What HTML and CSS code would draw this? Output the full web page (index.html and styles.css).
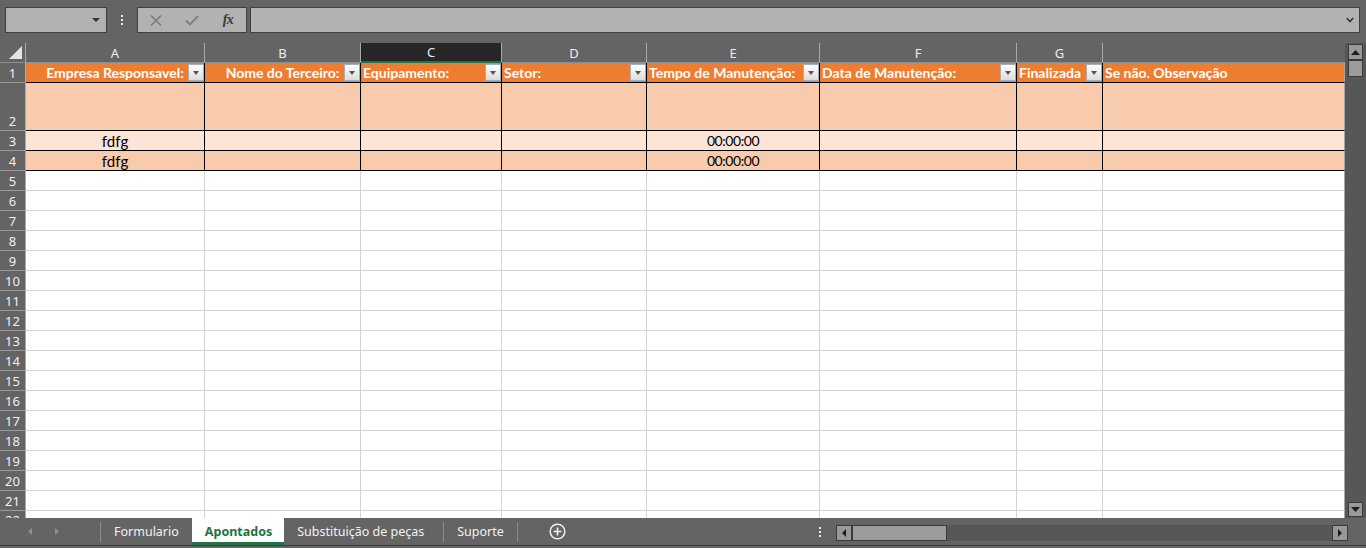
FILE: index.html
```html
<!DOCTYPE html>
<html>
<head>
<meta charset="utf-8">
<link rel="stylesheet" href="styles.css">
</head>
<body>
<div class="app">
  <div class="toolbar">
    <div class="namebox"><span class="nb-arrow"></span></div>
    <div class="vdots"><i></i><i></i><i></i></div>
    <div class="fbtns">
      <div class="fbtn"><svg width="12" height="11" viewBox="0 0 12 11"><path d="M1 0.5 L11 10.5 M11 0.5 L1 10.5" stroke="#7c7c7c" stroke-width="1.6" fill="none"/></svg></div>
      <div class="fbtn"><svg width="14" height="11" viewBox="0 0 14 11"><path d="M1 5.5 L5 9.5 L13 0.8" stroke="#7c7c7c" stroke-width="1.8" fill="none"/></svg></div>
      <div class="fbtn"><span class="fx">fx</span></div>
    </div>
    <div class="finput"><svg width="8" height="6" viewBox="0 0 8 6"><path d="M0.8 1 L4 4.5 L7.2 1" stroke="#333" stroke-width="1.6" fill="none"/></svg></div>
  </div>

  <div class="main">
    <div class="grid">
      <div class="row hdr">
        <div class="corner"><svg width="13" height="13" viewBox="0 0 13 13"><path d="M13 0 L13 13 L0 13 Z" fill="#e4e4e4"/></svg></div>
        <div class="ch">A</div>
        <div class="ch">B</div>
        <div class="ch sel">C</div>
        <div class="ch">D</div>
        <div class="ch">E</div>
        <div class="ch">F</div>
        <div class="ch">G</div>
        <div class="ch last"></div>
      </div>

      <div class="row r1">
        <div class="rh">1</div>
        <div class="c th ctr">Empresa Responsavel:<span class="fb"></span></div>
        <div class="c th ctr">Nome do Terceiro:<span class="fb"></span></div>
        <div class="c th">Equipamento:<span class="fb"></span></div>
        <div class="c th">Setor:<span class="fb"></span></div>
        <div class="c th">Tempo de Manutenção:<span class="fb"></span></div>
        <div class="c th">Data de Manutenção:<span class="fb"></span></div>
        <div class="c th">Finalizada<span class="fb"></span></div>
        <div class="c th last">Se não. Observação</div>
      </div>

      <div class="row r2">
        <div class="rh">2</div>
        <div class="c tb dark"></div><div class="c tb dark"></div><div class="c tb dark"></div><div class="c tb dark"></div>
        <div class="c tb dark"></div><div class="c tb dark"></div><div class="c tb dark"></div><div class="c tb dark last"></div>
      </div>

      <div class="row">
        <div class="rh">3</div>
        <div class="c tb light ctr">fdfg</div><div class="c tb light"></div><div class="c tb light"></div><div class="c tb light"></div>
        <div class="c tb light ctr num">00:00:00</div><div class="c tb light"></div><div class="c tb light"></div><div class="c tb light last"></div>
      </div>

      <div class="row">
        <div class="rh">4</div>
        <div class="c tb dark ctr">fdfg</div><div class="c tb dark"></div><div class="c tb dark"></div><div class="c tb dark"></div>
        <div class="c tb dark ctr num">00:00:00</div><div class="c tb dark"></div><div class="c tb dark"></div><div class="c tb dark last"></div>
      </div>

      <div class="row"><div class="rh">5</div><div class="c"></div><div class="c"></div><div class="c"></div><div class="c"></div><div class="c"></div><div class="c"></div><div class="c"></div><div class="c last"></div></div>
      <div class="row"><div class="rh">6</div><div class="c"></div><div class="c"></div><div class="c"></div><div class="c"></div><div class="c"></div><div class="c"></div><div class="c"></div><div class="c last"></div></div>
      <div class="row"><div class="rh">7</div><div class="c"></div><div class="c"></div><div class="c"></div><div class="c"></div><div class="c"></div><div class="c"></div><div class="c"></div><div class="c last"></div></div>
      <div class="row"><div class="rh">8</div><div class="c"></div><div class="c"></div><div class="c"></div><div class="c"></div><div class="c"></div><div class="c"></div><div class="c"></div><div class="c last"></div></div>
      <div class="row"><div class="rh">9</div><div class="c"></div><div class="c"></div><div class="c"></div><div class="c"></div><div class="c"></div><div class="c"></div><div class="c"></div><div class="c last"></div></div>
      <div class="row"><div class="rh">10</div><div class="c"></div><div class="c"></div><div class="c"></div><div class="c"></div><div class="c"></div><div class="c"></div><div class="c"></div><div class="c last"></div></div>
      <div class="row"><div class="rh">11</div><div class="c"></div><div class="c"></div><div class="c"></div><div class="c"></div><div class="c"></div><div class="c"></div><div class="c"></div><div class="c last"></div></div>
      <div class="row"><div class="rh">12</div><div class="c"></div><div class="c"></div><div class="c"></div><div class="c"></div><div class="c"></div><div class="c"></div><div class="c"></div><div class="c last"></div></div>
      <div class="row"><div class="rh">13</div><div class="c"></div><div class="c"></div><div class="c"></div><div class="c"></div><div class="c"></div><div class="c"></div><div class="c"></div><div class="c last"></div></div>
      <div class="row"><div class="rh">14</div><div class="c"></div><div class="c"></div><div class="c"></div><div class="c"></div><div class="c"></div><div class="c"></div><div class="c"></div><div class="c last"></div></div>
      <div class="row"><div class="rh">15</div><div class="c"></div><div class="c"></div><div class="c"></div><div class="c"></div><div class="c"></div><div class="c"></div><div class="c"></div><div class="c last"></div></div>
      <div class="row"><div class="rh">16</div><div class="c"></div><div class="c"></div><div class="c"></div><div class="c"></div><div class="c"></div><div class="c"></div><div class="c"></div><div class="c last"></div></div>
      <div class="row"><div class="rh">17</div><div class="c"></div><div class="c"></div><div class="c"></div><div class="c"></div><div class="c"></div><div class="c"></div><div class="c"></div><div class="c last"></div></div>
      <div class="row"><div class="rh">18</div><div class="c"></div><div class="c"></div><div class="c"></div><div class="c"></div><div class="c"></div><div class="c"></div><div class="c"></div><div class="c last"></div></div>
      <div class="row"><div class="rh">19</div><div class="c"></div><div class="c"></div><div class="c"></div><div class="c"></div><div class="c"></div><div class="c"></div><div class="c"></div><div class="c last"></div></div>
      <div class="row"><div class="rh">20</div><div class="c"></div><div class="c"></div><div class="c"></div><div class="c"></div><div class="c"></div><div class="c"></div><div class="c"></div><div class="c last"></div></div>
      <div class="row"><div class="rh">21</div><div class="c"></div><div class="c"></div><div class="c"></div><div class="c"></div><div class="c"></div><div class="c"></div><div class="c"></div><div class="c last"></div></div>
      <div class="row"><div class="rh top">22</div><div class="c"></div><div class="c"></div><div class="c"></div><div class="c"></div><div class="c"></div><div class="c"></div><div class="c"></div><div class="c last"></div></div>
    </div>
    <div class="vscroll">
      <div class="sbtn"><svg width="9" height="5" viewBox="0 0 9 5"><path d="M0 5 L4.5 0 L9 5 Z" fill="#1e1e1e"/></svg></div>
      <div class="vthumb"></div>
      <div class="sbtn bottom"><svg width="9" height="5" viewBox="0 0 9 5"><path d="M0 0 L9 0 L4.5 5 Z" fill="#1e1e1e"/></svg></div>
    </div>
  </div>

  <div class="tabbar">
    <div class="tabrow">
      <div class="tabnav">
        <svg width="4" height="7" viewBox="0 0 4 7"><path d="M4 0 L0 3.5 L4 7 Z" fill="#8e8e8e"/></svg>
        <svg width="4" height="7" viewBox="0 0 4 7"><path d="M0 0 L4 3.5 L0 7 Z" fill="#8e8e8e"/></svg>
      </div>
      <div class="tsep"></div>
      <div class="tab">Formulario</div>
      <div class="tab active">Apontados</div>
      <div class="tab wide">Substituição de peças</div>
      <div class="tsep"></div>
      <div class="tab">Suporte</div>
      <div class="tsep"></div>
      <div class="addtab"><svg width="17" height="17" viewBox="0 0 17 17"><circle cx="8.5" cy="8.5" r="7.3" stroke="#f2f2f2" stroke-width="1.5" fill="none"/><path d="M8.5 4.6 V12.4 M4.6 8.5 H12.4" stroke="#f2f2f2" stroke-width="1.6"/></svg></div>
      <div class="spacer"></div>
      <div class="hdots"><i></i><i></i><i></i></div>
      <div class="hscroll">
        <div class="hbtn"><svg width="4" height="8" viewBox="0 0 4 8"><path d="M4 0 L0 4 L4 8 Z" fill="#1e1e1e"/></svg></div>
        <div class="hthumb"></div>
        <div class="htrack"></div>
        <div class="hbtn"><svg width="4" height="8" viewBox="0 0 4 8"><path d="M0 0 L4 4 L0 8 Z" fill="#1e1e1e"/></svg></div>
      </div>
    </div>
  </div>
</div>
</body>
</html>
```

FILE: styles.css
```css
* { box-sizing: border-box; margin: 0; padding: 0; }
html, body { width: 1366px; height: 548px; overflow: hidden; }
body { background: #646464; font-family: "Noto Sans", "Open Sans", sans-serif; }

.app { width: 1366px; height: 548px; display: flex; flex-direction: column; }

/* ---------- formula bar ---------- */
.toolbar { height: 43px; flex: none; display: flex; align-items: flex-start; padding: 7px 6px 0 5px; }
.namebox { width: 102px; height: 26px; background: #b2b2b2; border: 1px solid #404040; display: flex; align-items: center; justify-content: flex-end; padding-right: 6px; }
.nb-arrow { width: 0; height: 0; border-left: 4px solid transparent; border-right: 4px solid transparent; border-top: 4px solid #333; }
.vdots { width: 30px; height: 26px; display: flex; flex-direction: column; align-items: center; justify-content: center; gap: 2px; }
.vdots i, .hdots i { display: block; width: 2px; height: 2px; background: #ececec; }
.fbtns { width: 110px; height: 26px; background: #b2b2b2; border: 1px solid #404040; display: flex; }
.fbtn { width: 36px; display: flex; align-items: center; justify-content: center; }
.fx { font-family: "Liberation Serif", "DejaVu Serif", serif; font-style: italic; font-weight: bold; font-size: 14px; color: #3a3a3a; line-height: 1; letter-spacing: -0.5px; }
.finput { flex: 1; margin-left: 3px; height: 26px; background: #b2b2b2; border: 1px solid #404040; display: flex; align-items: center; justify-content: flex-end; padding-right: 5px; }

/* ---------- sheet ---------- */
.main { height: 475px; flex: none; display: flex; }
.grid { width: 1345px; height: 475px; overflow: hidden; background: #fff; display: flex; flex-direction: column; }
.row { display: grid; grid-template-columns: 26px 179px 156px 141px 145px 173px 197px 86px 242px; height: 20px; flex: none; }
.row.r2 { height: 48px; }

.hdr { background: #646464; }
.corner { border-right: 1px solid #a9a9a9; border-bottom: 1px solid #8e8e8e; display: flex; align-items: flex-end; justify-content: flex-end; padding: 0 3px 3px 0; }
.ch { border-right: 1px solid #a9a9a9; border-bottom: 1px solid #8e8e8e; color: #ececec; font-size: 13px; line-height: 18px; display: flex; justify-content: center; align-items: center; }
.ch.sel { background: #262626; border-bottom: 2px solid #217346; }
.ch.last { border-right: none; }

.rh { background: #646464; border-right: 1px solid #a9a9a9; border-bottom: 1px solid #9a9a9a; color: #f0f0f0; font-size: 13px; line-height: 18px; display: flex; justify-content: center; align-items: flex-end; }
.rh.top { align-items: flex-start; }

.c { border-right: 1px solid #d4d4d4; border-bottom: 1px solid #d4d4d4; font-family: "Lato", "Carlito", sans-serif; font-size: 15px; line-height: 18px; color: #000; display: flex; align-items: flex-end; white-space: nowrap; position: relative; padding-left: 2px; }
.c.ctr { justify-content: center; padding-left: 0; }
.c.num { font-size: 14px; letter-spacing: -0.45px; }
.c.last { border-right: 1px solid #a5a5a5; }

.th { background: #ed7d31; color: #fff; font-weight: bold; font-size: 14px; border-right-color: #000; border-bottom-color: #000; }
.tb { border-right-color: #000; border-bottom-color: #000; }
.tb.dark { background: #f8cbad; }
.tb.light { background: #fce4d6; }

.fb { position: absolute; right: 0; top: 1px; width: 16px; height: 17px; border: 1px solid #a7aeb8; background: linear-gradient(#ffffff, #dcdcdc); display: flex; align-items: center; justify-content: center; }
.fb::after { content: ""; width: 0; height: 0; border-left: 3.5px solid transparent; border-right: 3.5px solid transparent; border-top: 4px solid #555; margin-top: 1px; }

/* ---------- vertical scrollbar ---------- */
.vscroll { width: 21px; background: #575757; display: flex; flex-direction: column; padding: 1px 3px 1px 3px; }
.sbtn { width: 15px; height: 16px; background: #999; border: 1px solid #3a3a3a; display: flex; align-items: center; justify-content: center; flex: none; }
.sbtn.bottom { margin-top: auto; height: 15px; }
.vthumb { width: 15px; height: 17px; background: #9b9b9b; border: 1px solid #3a3a3a; margin-top: 0; }

/* ---------- sheet tabs ---------- */
.tabbar { height: 30px; flex: none; }
.tabrow { height: 28px; border-bottom: 1px solid #3a3a3a; display: flex; align-items: stretch; }
.tabnav { width: 100px; display: flex; align-items: center; padding-left: 28px; gap: 23px; }
.tsep { width: 1px; background: #8c8c8c; margin: 4px 0 3px; flex: none; }
.tab { padding: 0 13px; display: flex; align-items: center; font-size: 12.5px; color: #f2f2f2; white-space: nowrap; }
.tab.wide { padding-right: 19px; }
.tab.active { background: #fff; color: #217346; font-weight: bold; border-bottom: 3px solid #217346; padding-top: 3px; padding-right: 12px; }
.addtab { width: 80px; display: flex; align-items: center; justify-content: center; }
.spacer { flex: 1; }
.hdots { width: 16px; display: flex; flex-direction: column; align-items: center; justify-content: center; gap: 2px; margin-right: 8px; }
.hscroll { width: 512px; height: 16px; margin: 7px 18px 0 0; display: flex; background: #575757; }
.hbtn { width: 16px; height: 16px; background: #999; border: 1px solid #3a3a3a; display: flex; align-items: center; justify-content: center; flex: none; }
.hthumb { width: 95px; height: 16px; background: #9b9b9b; border: 1px solid #3a3a3a; }
.htrack { flex: 1; }
```
